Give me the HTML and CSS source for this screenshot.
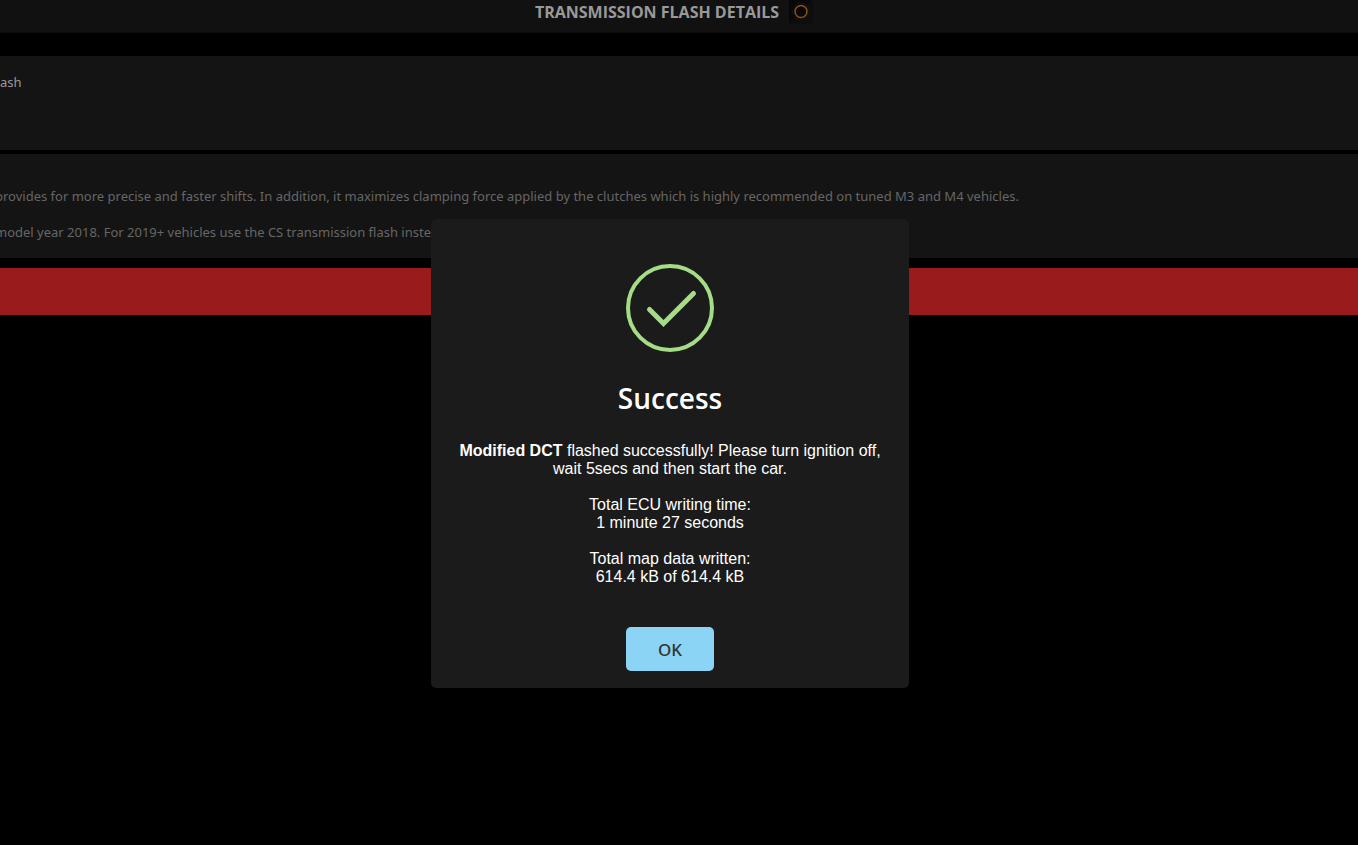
FILE: index.html
```html
<!DOCTYPE html>
<html lang="en">
<head>
   <meta charset="utf-8">
   <title>Transmission Flash Details</title>
   <link rel="stylesheet" href="styles.css">
</head>
<body>
   <header class="header">
      <h1 class="header-title">TRANSMISSION FLASH DETAILS</h1>
      <svg class="header-icon" viewBox="0 0 24 24" aria-hidden="true">
         <rect width="24" height="24" fill="#0d0d10"/>
         <path d="M0 0h23L0 23z" fill="#08080a"/>
         <circle cx="12" cy="11.5" r="8.5" fill="none" stroke="#17130d"/>
         <circle cx="12" cy="11.5" r="6" fill="#0a0908" stroke="#8a5410" stroke-width="1.5"/>
      </svg>
   </header>
   <main>
      <section class="panel panel-name">
         <p>ash</p>
      </section>
      <section class="panel panel-info">
         <p>provides for more precise and faster shifts. In addition, it maximizes clamping force applied by the clutches which is highly recommended on tuned M3 and M4 vehicles.</p>
         <p>model year 2018. For 2019+ vehicles use the CS transmission flash instead.</p>
      </section>
      <div class="alert-bar"></div>
   </main>
   <div class="overlay">
      <div class="modal" role="dialog" aria-modal="true" aria-labelledby="modal-title">
         <svg class="modal-icon" viewBox="0 0 88 88" aria-hidden="true">
            <circle cx="44" cy="44" r="42" fill="none" stroke="#a5dc86" stroke-width="4"/>
            <path d="M23.5 45.5L37.5 59.5L67.5 29.5" fill="none" stroke="#a5dc86" stroke-width="5" stroke-linecap="round"/>
         </svg>
         <h2 class="modal-title" id="modal-title">Success</h2>
         <div class="modal-text">
            <p><b>Modified DCT</b> flashed successfully! Please turn ignition off, wait 5secs and then start the car.</p>
            <p>Total ECU writing time:<br>1 minute 27 seconds</p>
            <p>Total map data written:<br>614.4 kB of 614.4 kB</p>
         </div>
         <button class="button-ok" type="button">OK</button>
      </div>
   </div>
</body>
</html>
```
FILE: styles.css
```css
* {
    margin: 0;
    padding: 0;
    box-sizing: border-box;
}
body {
    background: #000;
    color: #666;
    font-family: "Noto Sans", sans-serif;
    font-size: 13px;
    line-height: 20px;
    min-height: 100vh;
    overflow: hidden;
}
.header {
    display: flex;
    justify-content: center;
    gap: 10px;
    height: 33px;
    padding-right: 10px;
    background: #111;
    border-bottom: 1px solid #0c0c0c;
}
.header-title {
    color: #999;
    font-family: "Open Sans", sans-serif;
    font-size: 16px;
    font-weight: 700;
    line-height: 24px;
}
.header-icon {
    width: 24px;
    height: 24px;
}
main {
    margin-top: 23px;
}
.panel {
    display: flex;
    flex-direction: column;
    gap: 16px;
    margin-bottom: 4px;
    background: #141414;
    white-space: nowrap;
}
.panel-name {
    padding: 16px 0 58px;
    color: #999;
}
.panel-info {
    padding: 32px 0 16px;
    margin-bottom: 10px;
}
/* text runs off the left edge */
.panel-info p {
    margin-left: -5px;
}
.alert-bar {
    height: 47px;
    background: #991b1b;
}
.overlay {
    position: absolute;
    inset: 0;
    display: flex;
    justify-content: center;
    align-items: center;
    padding: 62px 18px 0 0;
}
.modal {
    display: flex;
    flex-direction: column;
    align-items: center;
    width: 478px;
    padding: 45px 20px 17px;
    background: #1b1b1b;
    border-radius: 5px;
    color: #fff;
    text-align: center;
}
.modal-icon {
    width: 88px;
    height: 88px;
}
.modal-title {
    margin-top: 26px;
    font-family: "Open Sans", sans-serif;
    font-size: 28px;
    font-weight: 600;
    line-height: 40px;
}
.modal-text {
    display: flex;
    flex-direction: column;
    gap: 18px;
    margin-top: 24px;
    font-family: "Liberation Sans", sans-serif;
    font-size: 16px;
    line-height: 18px;
}
.button-ok {
    width: 88px;
    height: 44px;
    margin-top: 41px;
    background: #8cd4f5;
    border: none;
    border-radius: 5px;
    color: #333;
    font-family: "Noto Sans", sans-serif;
    font-size: 17px;
    font-weight: 500;
    cursor: pointer;
}
```
